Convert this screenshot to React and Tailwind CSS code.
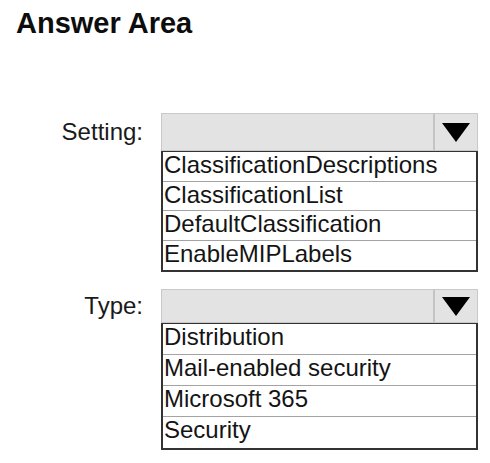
import React from "react";

const settingOptions = [
  "ClassificationDescriptions",
  "ClassificationList",
  "DefaultClassification",
  "EnableMIPLabels",
];

const typeOptions = [
  "Distribution",
  "Mail-enabled security",
  "Microsoft 365",
  "Security",
];

const Arrow = () => (
  <svg width="28" height="19" viewBox="0 0 28 19">
    <polygon points="0,0 28,0 14,19" fill="#000" />
  </svg>
);

const DropField = ({ label, options, barH, rowH }) => (
  <div className="grid grid-cols-[143px_317px] gap-x-[18px]">
    <div className="self-center text-right text-[24px] leading-[28px] text-[#1a1a1a]">
      {label}
    </div>
    <div
      className={`flex border border-[#c9c9c9] bg-[#e3e3e3] ${barH}`}
    >
      <div className="flex-1" />
      <div className="flex w-[44px] items-center justify-center border-l-2 border-[#c4c4c4]">
        <Arrow />
      </div>
    </div>
    <div />
    <div className="border-2 border-t-[1.5px] border-[#333]">
      {options.map((opt, i) => (
        <div
          key={opt}
          className={`${rowH} pl-[1px] text-[24px] leading-[26px] text-[#141414] ${
            i < options.length - 1 ? "border-b border-[#a3a3a3]" : ""
          }`}
        >
          {opt}
        </div>
      ))}
    </div>
  </div>
);

export default function App() {
  return (
    <div
      className="h-[463px] w-[490px] overflow-hidden bg-white"
      style={{ fontFamily: '"Liberation Sans", Arial, sans-serif' }}
    >
      <h1 className="pl-[16px] pt-[9px] text-[29px] font-bold leading-[29px] text-[#0d0d0d]">
        Answer Area
      </h1>
      <div className="mt-[75px]">
        <DropField
          label="Setting:"
          options={settingOptions}
          barH="h-[38px]"
          rowH="h-[29.5px]"
        />
      </div>
      <div className="mt-[17px]">
        <DropField
          label="Type:"
          options={typeOptions}
          barH="h-[34px]"
          rowH="h-[31px]"
        />
      </div>
    </div>
  );
}
